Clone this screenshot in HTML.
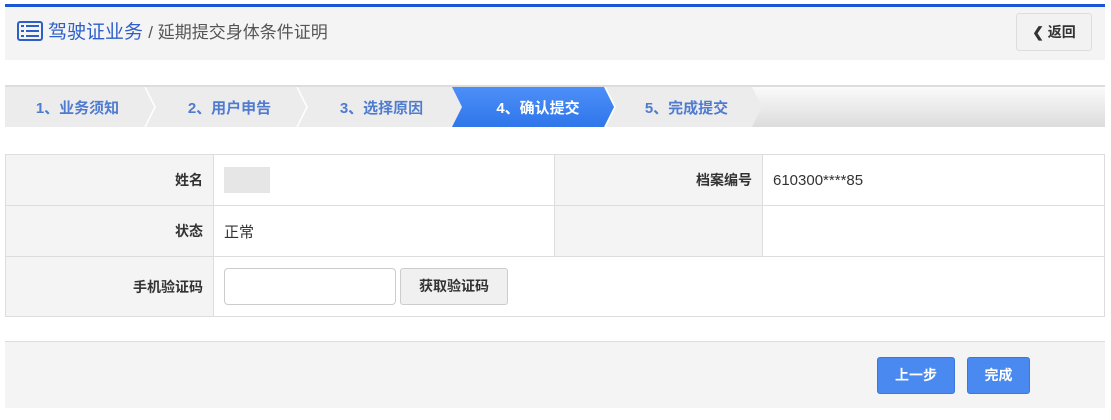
<!DOCTYPE html>
<html><head><meta charset="utf-8"><style>
*{margin:0;padding:0;box-sizing:border-box}
body{width:1111px;height:420px;background:#fff;font-family:"Liberation Sans","Noto Sans CJK SC",sans-serif;position:relative;overflow:hidden;color:#333}
.abs{position:absolute}
.topbar{left:5px;top:4px;width:1100px;height:3px;background:#1a56d6}
.header{left:5px;top:7px;width:1100px;height:53px;background:#f4f4f4}
.title{left:17px;top:20px;font-size:19px;color:#2e5fc8;line-height:26px;white-space:nowrap}
.title span{color:#555;font-size:17px}
.back{left:1016px;top:13px;width:76px;height:38px;border:1px solid #ddd;border-radius:3px;background:#f2f2f2;font-size:14px;font-weight:bold;color:#333;text-align:center;line-height:36px}
.steps{left:5px;top:85px;width:1100px;height:42px;border-top:2px solid #ddd;background:linear-gradient(to bottom,#fafafa,#dcdcdc)}
.step{position:absolute;top:0;height:40px;line-height:43px;font-size:15px;font-weight:bold;color:#4f7bd0;text-align:center}
.grey{background:#ececec}
.blue{background:linear-gradient(#4d8ff8,#2f76ea);color:#fff;clip-path:polygon(0 0,152px 0,162px 50%,152px 100%,0 100%,10px 50%)}
table{position:absolute;left:5px;top:154px;width:1100px;border-collapse:collapse;font-size:14px}
td{border:1px solid #ddd;height:51px;padding:0 10px}
td.v{font-size:15px}
td.l{background:#f4f4f4;text-align:right;width:208px;color:#333;font-weight:bold}
.footer{left:5px;top:341px;width:1100px;height:67px;background:#f4f4f4;border-top:1px solid #ddd}
.btn{background:#4a8af0;border:1px solid #3a78dd;border-radius:3px;color:#fff;font-size:14px;font-weight:bold;text-align:center;line-height:35px;height:37px}
</style></head><body>
<div class="abs topbar"></div>
<div class="abs header"></div>
<div class="abs title"><svg width="26" height="20" viewBox="0 0 26 20" style="vertical-align:-3px;margin-right:5px"><rect x="1" y="1" width="24" height="18" rx="2" fill="none" stroke="#2e5fc8" stroke-width="2"/><rect x="4" y="4" width="3" height="2" fill="#2e5fc8"/><rect x="9" y="4" width="13" height="2" fill="#2e5fc8"/><rect x="4" y="9" width="3" height="2" fill="#2e5fc8"/><rect x="9" y="9" width="13" height="2" fill="#2e5fc8"/><rect x="4" y="14" width="3" height="2" fill="#2e5fc8"/><rect x="9" y="14" width="13" height="2" fill="#2e5fc8"/></svg>驾驶证业务 <span>/ 延期提交身体条件证明</span></div>
<div class="abs back">&#10094; 返回</div>
<div class="abs steps">
<div class="step grey" style="left:0;width:757px;clip-path:polygon(0 0,747px 0,757px 50%,747px 100%,0 100%)"></div>
<svg class="abs" style="left:0;top:0" width="760" height="40"><g stroke="#fff" stroke-width="1.5" fill="none"><path d="M140 0 L150 20 L140 40"/><path d="M292 0 L302 20 L292 40"/><path d="M600 0 L610 20 L600 40"/></g></svg>
<div class="step" style="left:0;width:145px">1、业务须知</div>
<div class="step" style="left:152px;width:145px">2、用户申告</div>
<div class="step" style="left:304px;width:145px">3、选择原因</div>
<div class="step blue" style="left:447px;width:162px;padding-left:10px">4、确认提交</div>
<div class="step" style="left:609px;width:145px">5、完成提交</div>
</div>
<table>
<tr><td class="l">姓名</td><td style="width:341px"><div style="width:46px;height:26px;background:#e6e6e6"></div></td><td class="l">档案编号</td><td class="v">610300****85</td></tr>
<tr><td class="l">状态</td><td class="v">正常</td><td class="l"></td><td></td></tr>
<tr><td class="l" style="height:60px">手机验证码</td><td colspan="3"><div style="display:flex;gap:4px"><div style="width:172px;height:37px;border:1px solid #ccc;border-radius:4px;background:#fff"></div><div style="width:108px;height:37px;border:1px solid #ccc;border-radius:3px;background:#f0f0f0;text-align:center;line-height:35px;font-weight:bold">获取验证码</div></div></td></tr>
</table>
<div class="abs footer"></div>
<div class="abs btn" style="left:877px;top:357px;width:78px">上一步</div>
<div class="abs btn" style="left:967px;top:357px;width:63px">完成</div>
</body></html>
